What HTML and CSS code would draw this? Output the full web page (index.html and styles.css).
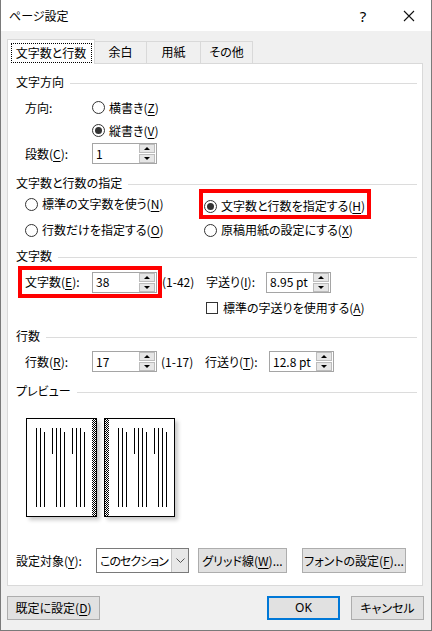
FILE: index.html
```html
<!DOCTYPE html>
<html lang="ja">
<head>
    <meta charset="UTF-8">
    <title>ページ設定</title>
    <link rel="stylesheet" href="styles.css">
</head>
<body>
<div class="window">
    <div class="titlebar">
        <span class="title">ページ設定</span>
        <span class="help">?</span>
        <span class="close">
            <svg width="12" height="12" viewBox="0 0 12 12"><path d="M1 1L11 11M11 1L1 11" stroke="#111" stroke-width="1.1"/></svg>
        </span>
    </div>

    <div class="client">
        <div class="tabs">
            <div class="tab active"><span class="focus">文字数と行数</span></div>
            <div class="tab t1">余白</div>
            <div class="tab t2">用紙</div>
            <div class="tab t3">その他</div>
        </div>

        <div class="panel">
            <!-- 文字方向 -->
            <div class="group">文字方向</div>
            <div class="dir-grid">
                <span>方向:</span>
                <label class="radio"><i class="rb"></i>横書き(<u>Z</u>)</label>
                <span></span>
                <label class="radio"><i class="rb on"></i>縦書き(<u>V</u>)</label>
            </div>
            <div class="row cols">
                <span class="lbl">段数(<u>C</u>):</span>
                <div class="spin"><span class="val">1</span><span class="arrows"><span class="up"></span><span class="down"></span></span></div>
            </div>

            <!-- 文字数と行数の指定 -->
            <div class="group g2">文字数と行数の指定</div>
            <div class="mode-grid">
                <label class="radio"><i class="rb"></i>標準の文字数を使う(<u>N</u>)</label>
                <label class="radio marked"><i class="rb on"></i>文字数と行数を指定する(<u>H</u>)</label>
                <label class="radio"><i class="rb"></i>行数だけを指定する(<u>O</u>)</label>
                <label class="radio right"><i class="rb"></i>原稿用紙の設定にする(<u>X</u>)</label>
            </div>

            <!-- 文字数 -->
            <div class="group g3">文字数</div>
            <div class="row chars">
                <div class="marked-box">
                    <span class="lbl">文字数(<u>E</u>):</span>
                    <div class="spin"><span class="val">38</span><span class="arrows"><span class="up"></span><span class="down"></span></span></div>
                </div>
                <span class="range">(1-42)</span>
                <span class="lbl2">字送り(<u>I</u>):</span>
                <div class="spin"><span class="val">8.95 pt</span><span class="arrows"><span class="up"></span><span class="down"></span></span></div>
            </div>
            <label class="check"><i class="cb"></i>標準の字送りを使用する(<u>A</u>)</label>

            <!-- 行数 -->
            <div class="group g4">行数</div>
            <div class="row lines">
                <span class="lbl">行数(<u>R</u>):</span>
                <div class="spin"><span class="val">17</span><span class="arrows"><span class="up"></span><span class="down"></span></span></div>
                <span class="range">(1-17)</span>
                <span class="lbl3">行送り(<u>T</u>):</span>
                <div class="spin"><span class="val">12.8 pt</span><span class="arrows"><span class="up"></span><span class="down"></span></span></div>
            </div>

            <!-- プレビュー -->
            <div class="group g5">プレビュー</div>
            <div class="preview">
                <div class="page">
                    <svg width="71" height="99" viewBox="0 0 71 99">
                        <defs>
                            <pattern id="chk1" width="2" height="2" patternUnits="userSpaceOnUse">
                                <rect width="1" height="1" fill="#000"/><rect x="1" y="1" width="1" height="1" fill="#000"/>
                            </pattern>
                        </defs>
                        <rect x="0.5" y="0.5" width="70" height="98" fill="#fff" stroke="#000"/>
                        <rect x="66" y="1" width="4" height="97" fill="url(#chk1)"/>
                        <g fill="#000">
                            <rect x="10" y="10" width="1" height="79"/>
                            <rect x="14" y="10" width="1" height="79"/>
                            <rect x="18" y="14" width="1" height="75"/>
                            <rect x="26" y="10" width="1" height="26"/>
                            <rect x="30" y="10" width="1" height="79"/>
                            <rect x="34" y="10" width="1" height="79"/>
                            <rect x="38" y="14" width="1" height="75"/>
                            <rect x="46" y="10" width="1" height="26"/>
                            <rect x="50" y="10" width="1" height="79"/>
                            <rect x="54" y="10" width="1" height="79"/>
                            <rect x="58" y="14" width="1" height="75"/>
                        </g>
                    </svg>
                </div>
                <div class="page">
                    <svg width="71" height="99" viewBox="0 0 71 99">
                        <defs>
                            <pattern id="chk2" width="2" height="2" patternUnits="userSpaceOnUse">
                                <rect width="1" height="1" fill="#000"/><rect x="1" y="1" width="1" height="1" fill="#000"/>
                            </pattern>
                        </defs>
                        <rect x="0.5" y="0.5" width="70" height="98" fill="#fff" stroke="#000"/>
                        <rect x="1" y="1" width="4" height="97" fill="url(#chk2)"/>
                        <g fill="#000">
                            <rect x="14" y="10" width="1" height="79"/>
                            <rect x="18" y="10" width="1" height="79"/>
                            <rect x="22" y="14" width="1" height="75"/>
                            <rect x="30" y="10" width="1" height="26"/>
                            <rect x="34" y="10" width="1" height="79"/>
                            <rect x="38" y="10" width="1" height="79"/>
                            <rect x="42" y="14" width="1" height="75"/>
                            <rect x="50" y="10" width="1" height="26"/>
                            <rect x="54" y="10" width="1" height="79"/>
                            <rect x="58" y="10" width="1" height="79"/>
                            <rect x="62" y="14" width="1" height="75"/>
                        </g>
                    </svg>
                </div>
            </div>

            <div class="row target">
                <span class="lbl4">設定対象(<u>Y</u>):</span>
                <div class="select">
                    <span class="sel-val">このセクション</span>
                    <span class="sel-btn"><svg width="9" height="5" viewBox="0 0 9 5"><path d="M0.5 0.5L4.5 4.5L8.5 0.5" fill="none" stroke="#555" stroke-width="1"/></svg></span>
                </div>
                <button class="btn grid-btn">グリッド線(<u>W</u>)...</button>
                <button class="btn font-btn">フォントの設定(<u>F</u>)...</button>
            </div>
        </div>

        <div class="footer">
            <button class="btn default-btn">既定に設定(<u>D</u>)</button>
            <button class="btn ok">OK</button>
            <button class="btn cancel">キャンセル</button>
        </div>
    </div>
</div>
</body>
</html>
```

FILE: styles.css
```css
:root {
    --face: #f0f0f0;
    --rule: #dcdcdc;
    --tab-border: #d9d9d9;
    --btn-bg: #e1e1e1;
    --btn-border: #adadad;
    --field-border: #a5a5a5;
    --mark: #ff0000;
    --accent: #0078d7;
}

* {
    box-sizing: border-box;
}

body {
    margin: 0;
    font-family: "Noto Sans CJK JP", "Noto Sans", sans-serif;
    font-size: 12px;
    line-height: 16px;
    color: #000;
    font-feature-settings: "palt";
    background: #fff;
}

u {
    text-decoration-thickness: 1px;
    text-underline-offset: 2px;
}

.window {
    width: 432px;
    height: 631px;
    border: 1px solid #7a7a7a;
    border-top: none;
    display: flex;
    flex-direction: column;
}

/* title bar */
.titlebar {
    height: 31px;
    display: flex;
    align-items: center;
    background: #fff;
}

.title {
    margin-left: 8px;
}

.help {
    margin-left: auto;
    width: 46px;
    text-align: center;
    font-family: "Noto Sans", sans-serif;
    font-size: 15px;
}

.close {
    width: 45px;
    display: flex;
    justify-content: center;
}

/* client area */
.client {
    flex: 1;
    background: var(--face);
    padding: 8px 7px 0 6px;
}

.tabs {
    display: flex;
    align-items: flex-end;
    height: 24px;
}

.tab {
    height: 22px;
    display: flex;
    align-items: center;
    justify-content: center;
    border-top: 1px solid var(--tab-border);
    border-right: 1px solid var(--tab-border);
    padding-bottom: 1px;
}

.tab.active {
    position: relative;
    z-index: 1;
    width: 88px;
    height: 25px;
    margin-bottom: -1px;
    background: #fff;
    border-left: 1px solid var(--tab-border);
    align-items: flex-start;
    padding: 3px 0 0;
}

.focus {
    width: 81px;
    height: 20px;
    border: 1px dotted #000;
    display: flex;
    align-items: center;
    justify-content: center;
}

.t1 { width: 52px; }
.t2 { width: 54px; }
.t3 { width: 52px; }

.panel {
    width: 416px;
    height: 523px;
    background: #fff;
    border: 1px solid var(--tab-border);
    padding: 8px 5px 0 8px;
}

/* group headings with rule */
.group {
    display: flex;
    align-items: center;
    height: 20px;
}

.group::after {
    content: "";
    flex: 1;
    margin-left: 6px;
    margin-top: 2px;
    border-top: 1px solid var(--rule);
}

.g2 { margin-top: 10px; height: 16px; }
.g3 { margin-top: 7px; height: 16px; }
.g4 { margin-top: 12px; height: 16px; }
.g5 { margin-top: 10px; height: 16px; }

/* radios and checkbox */
.radio, .check {
    display: flex;
    align-items: center;
}

.rb {
    width: 13px;
    height: 13px;
    border: 1px solid #333;
    border-radius: 50%;
    margin-right: 4px;
    display: flex;
    align-items: center;
    justify-content: center;
    flex: none;
}

.rb.on::before {
    content: "";
    width: 7px;
    height: 7px;
    border-radius: 50%;
    background: #333;
}

.cb {
    width: 12px;
    height: 12px;
    border: 1px solid #333;
    margin-right: 5px;
}

.dir-grid {
    display: grid;
    grid-template-columns: 67px auto;
    grid-auto-rows: 23px;
    align-items: center;
    margin-top: 4px;
    padding-left: 9px;
}

.mode-grid {
    display: grid;
    grid-template-columns: 187px auto;
    grid-template-rows: 22px 22px;
    row-gap: 4px;
    margin-top: 2px;
}

.mode-grid .radio {
    padding-left: 9px;
}

.mode-grid .marked,
.mode-grid .right {
    padding-left: 1px;
}

.marked {
    width: 164px;
    padding-top: 4px;
    outline: 4px solid var(--mark);
}

/* rows */
.row {
    display: flex;
    align-items: center;
}

.cols {
    height: 23px;
    padding-left: 9px;
}

.lbl {
    width: 67px;
}

.spin {
    width: 65px;
    height: 21px;
    border: 1px solid var(--field-border);
    background: #fff;
    display: flex;
    align-items: center;
    flex: none;
}

.val {
    flex: 1;
    padding-left: 3px;
    white-space: nowrap;
}

.arrows {
    width: 16px;
    height: 19px;
    display: flex;
    flex-direction: column;
    gap: 1px;
    margin-right: 1px;
}

.up, .down {
    flex: 1;
    background: #e6e6e6;
    border: 1px solid #bcbcbc;
    display: flex;
    align-items: center;
    justify-content: center;
}

.up::before, .down::before {
    content: "";
    border-left: 3px solid transparent;
    border-right: 3px solid transparent;
}

.up::before { border-bottom: 3px solid #000; }
.down::before { border-top: 3px solid #000; }

.chars {
    height: 24px;
    margin-top: 6px;
}

.marked-box {
    display: flex;
    align-items: center;
    width: 136px;
    height: 24px;
    margin-left: 6px;
    padding-left: 3px;
    outline: 4px solid var(--mark);
}

.range {
    width: 44px;
    margin-left: 4px;
    font-feature-settings: normal;
}

.lbl2 { width: 60px; }
.lbl3 { width: 64px; }

.check {
    height: 16px;
    margin: 6px 0 0 190px;
}

.lines {
    height: 23px;
    margin-top: 6px;
    padding-left: 9px;
}

/* preview */
.preview {
    display: flex;
    gap: 7px;
    margin: 19px 0 0 10px;
}

.page {
    width: 71px;
    height: 99px;
    box-shadow: 3px 3px 4px rgba(0, 0, 0, 0.22);
}

.page svg {
    display: block;
}

/* bottom of panel */
.target {
    height: 25px;
    margin-top: 31px;
}

.lbl4 {
    width: 80px;
}

.select {
    width: 93px;
    height: 25px;
    border: 1px solid #7a7a7a;
    display: flex;
    align-items: center;
    background: #fff;
}

.sel-val {
    flex: 1;
    min-width: 0;
    padding-left: 3px;
    white-space: nowrap;
    overflow: hidden;
    letter-spacing: -1px;
}

.sel-btn {
    flex: none;
    width: 17px;
    height: 23px;
    background: #e8e8e8;
    border-left: 1px solid #c4c4c4;
    display: flex;
    align-items: center;
    justify-content: center;
}

.btn {
    font: inherit;
    color: #000;
    height: 25px;
    background: var(--btn-bg);
    border: 1px solid var(--btn-border);
    padding: 0;
    display: flex;
    align-items: center;
    justify-content: center;
    white-space: nowrap;
}

.grid-btn {
    width: 89px;
    margin-left: 9px;
}

.font-btn {
    width: 104px;
    margin-left: 15px;
}

.footer {
    display: flex;
    margin-top: 10px;
}

.footer .btn {
    height: 24px;
}

.default-btn {
    width: 93px;
}

.ok {
    width: 73px;
    margin-left: auto;
    border: 2px solid var(--accent);
    font-family: "Noto Sans", sans-serif;
}

.cancel {
    width: 73px;
    margin-left: 11px;
}
```
